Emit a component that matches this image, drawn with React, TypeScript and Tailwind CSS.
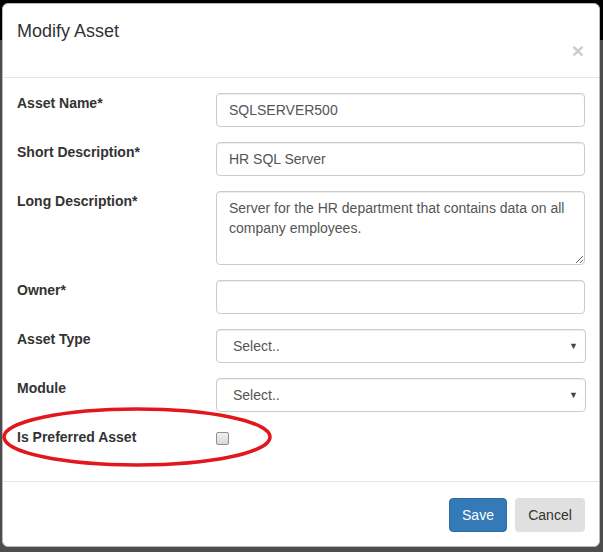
import { useState } from "react";

type Field = {
  label: string;
  kind: "input" | "textarea" | "select";
  value?: string;
};

const fields: Field[] = [
  { label: "Asset Name*", kind: "input", value: "SQLSERVER500" },
  { label: "Short Description*", kind: "input", value: "HR SQL Server" },
  {
    label: "Long Description*",
    kind: "textarea",
    value: "Server for the HR department that contains data on all company employees.",
  },
  { label: "Owner*", kind: "input", value: "" },
  { label: "Asset Type", kind: "select" },
  { label: "Module", kind: "select" },
];

const control =
  "w-full rounded-[4px] border border-[#ccc] bg-white px-3 text-[14px] text-[#555] shadow-[inset_0_1px_1px_rgba(0,0,0,0.075)] outline-none";

export default function App() {
  const [preferred, setPreferred] = useState(false);

  return (
    <div className="relative h-[552px] w-[603px] overflow-hidden bg-[linear-gradient(to_bottom,#000_40px,#4d4d4d_40px)] pt-[3px] pl-[2px] font-['Liberation_Sans',Arial,sans-serif] text-[#333]">
      <div className="flex h-[544px] w-[598px] flex-col rounded-[6px] border border-[#bbb] bg-white">
        {/* header */}
        <div className="flex h-[74px] flex-col border-b border-[#e5e5e5] px-[14px] pt-[14px]">
          <h4 className="text-[18px] leading-[26px]">Modify Asset</h4>
          <button
            type="button"
            className="mt-[-4px] self-end pr-[1px] text-[21px] leading-[21px] font-bold text-black opacity-20"
            aria-label="Close"
          >
            ×
          </button>
        </div>

        {/* body */}
        <div className="flex flex-1 flex-col gap-[15px] px-[14px] pt-[15px] pb-[15px]">
          {fields.map((field) => (
            <div key={field.label} className="grid grid-cols-[199px_1fr]">
              <label className="text-[14px] leading-[20px] font-bold">{field.label}</label>
              {field.kind === "input" && (
                <input
                  defaultValue={field.value}
                  className={`${control} h-[34px] w-[370px]`}
                />
              )}
              {field.kind === "textarea" && (
                <textarea
                  defaultValue={field.value}
                  className={`${control} h-[74px] w-[370px] py-[6px] leading-[20px]`}
                />
              )}
              {field.kind === "select" && (
                <div className="relative w-[370px]">
                  <select className={`${control} h-[34px] appearance-none pl-[16px]`}>
                    <option>Select..</option>
                  </select>
                  <span className="pointer-events-none absolute top-[11px] right-[8px] text-[9px] text-[#444]">
                    ▼
                  </span>
                </div>
              )}
            </div>
          ))}

          <div className="grid h-[26px] grid-cols-[199px_1fr]">
            <label className="text-[14px] leading-[20px] font-bold">Is Preferred Asset</label>
            <div className="pt-[5px]">
              <button
                type="button"
                onClick={() => setPreferred((v) => !v)}
                aria-label="Is Preferred Asset"
                className="block h-[13px] w-[13px] rounded-[2px] border border-[#8f8f8f] bg-[linear-gradient(to_bottom,#f0f0f0,#d8d8d8)]"
              >
                {preferred && <span className="block text-[10px] leading-[11px]">✓</span>}
              </button>
            </div>
          </div>
        </div>

        {/* footer */}
        <div className="flex justify-end gap-[8px] border-t border-[#e5e5e5] px-[14px] pt-[16px] pb-[14px]">
          <button
            type="button"
            className="h-[34px] w-[58px] rounded-[4px] border border-[#2e6da4] bg-[#337ab7] text-[14px] text-white"
          >
            Save
          </button>
          <button
            type="button"
            className="h-[34px] w-[70px] rounded-[4px] bg-[#e0e0e0] text-[14px] text-[#333]"
          >
            Cancel
          </button>
        </div>
      </div>

      {/* hand-drawn highlight */}
      <svg
        className="pointer-events-none absolute top-0 left-0"
        width="603"
        height="552"
        viewBox="0 0 603 552"
      >
        <ellipse cx="137" cy="437" rx="133" ry="28" fill="none" stroke="#e2161d" strokeWidth="3.5" />
      </svg>
    </div>
  );
}
